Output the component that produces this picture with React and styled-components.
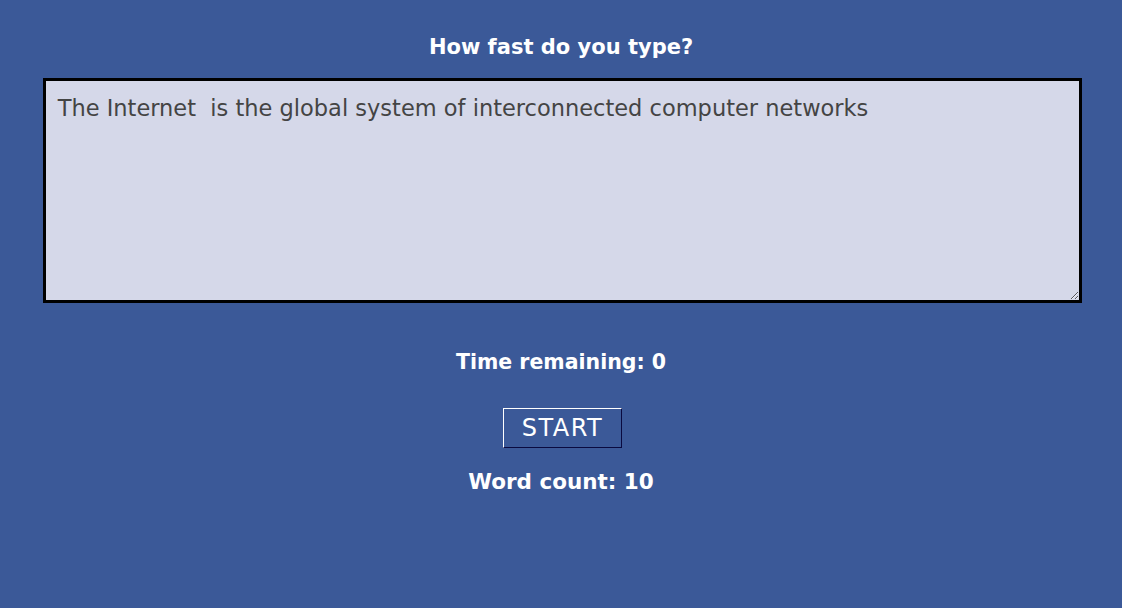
import React from "react";
import styled, { createGlobalStyle } from "styled-components";

const Global = createGlobalStyle`
  html, body { background: #3b5998; }
  body { margin: 8px; font-family: "Comic Sans MS", "DejaVu Sans", sans-serif; }
`;

const Page = styled.div`
  display: flex;
  flex-direction: column;
  align-items: center;
  color: #fff;
`;

const Title = styled.h1`
  margin: 24px 0 16px;
  font-size: 21px;
  font-weight: bold;
  line-height: 30px;
`;

const TextBox = styled.textarea`
  box-sizing: border-box;
  width: 94%;
  height: 225px;
  margin-left: 3px;
  background: #d5d8e9;
  border: 3px solid #000;
  color: #444;
  font-family: inherit;
  font-size: 22.5px;
  line-height: 30px;
  padding: 12px 12px;
  resize: both;
  outline: none;
`;

const Label = styled.h2`
  font-size: ${(p) => p.$size}px;
  font-weight: bold;
  line-height: 30px;
  margin: ${(p) => p.$m};
`;

const StartButton = styled.button`
  box-sizing: border-box;
  width: 119px;
  height: 40px;
  margin-left: 3px;
  background: #3b5998;
  color: #fff;
  font-family: inherit;
  font-size: 24px;
  letter-spacing: 1.5px;
  border-style: solid;
  border-width: 1px;
  border-color: #fff #0a0a40 #0a0a40 #fff;
  cursor: pointer;
`;

export default function App() {
  return (
    <>
      <Global />
      <Page>
        <Title>How fast do you type?</Title>
        <TextBox defaultValue="The Internet  is the global system of interconnected computer networks" />
        <Label $size={20.5} $m="44px 0 31px">Time remaining: 0</Label>
        <StartButton>START</StartButton>
        <Label $size={21.5} $m="19px 0">Word count: 10</Label>
      </Page>
    </>
  );
}
